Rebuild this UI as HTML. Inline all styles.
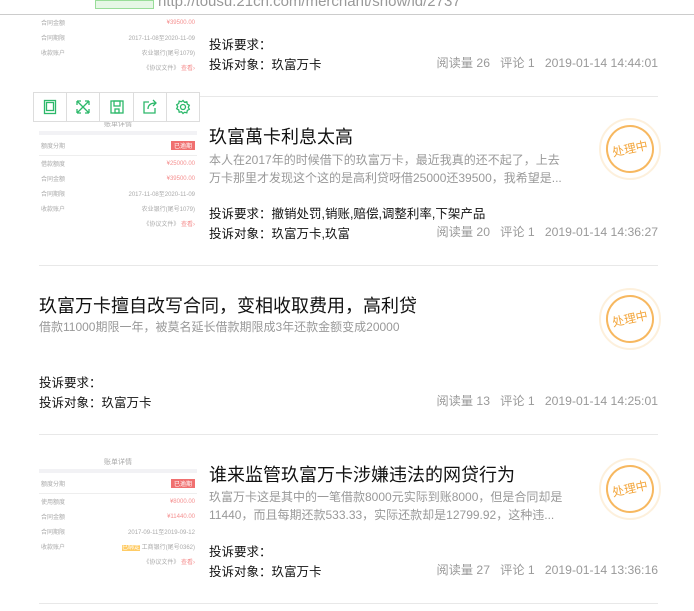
<!DOCTYPE html>
<html><head><meta charset="utf-8"><style>
body{margin:0;width:694px;height:611px;overflow:hidden;background:#fff;font-family:"Liberation Sans","Noto Sans CJK SC",sans-serif;position:relative}
.a{position:absolute;white-space:nowrap}
.t{font-size:18px;color:#111}
.d{font-size:12px;color:#999;line-height:18px}
.r{font-size:12.5px;color:#111}
.m{font-size:12.2px;color:#999;right:36px}
.hr{position:absolute;left:39px;width:619px;height:1px;background:#e8e8e8}
.stamp{position:absolute;width:58px;height:58px;border-radius:50%;border:2px solid #fdf0dc}
.stamp div{position:absolute;left:5px;top:5px;width:44px;height:44px;border-radius:50%;border:2px solid #f7b860;color:#f3a63c;font-size:12px;line-height:44px;text-align:center;transform:rotate(-12deg)}
.img{position:absolute;left:39px;width:158px;font-size:6px;color:#aaa}
.row{display:flex;justify-content:space-between;height:15px;align-items:center;padding:0 2px}
.red{color:#f59090}
.tb{position:absolute;left:33px;top:92px;width:165px;height:28px;border:1px solid #ddd;background:#fff;display:flex}
.tb div{flex:1;border-right:1px solid #ddd;display:flex;align-items:center;justify-content:center}
.tb div:last-child{border:none}
</style></head><body>
<div class="a" style="left:0;top:0;width:694px;height:14px;border-bottom:1px solid #ccc;background:#fff"></div>
<div class="a" style="left:95px;top:0;width:57px;height:7px;background:#e6f7e6;border:1px solid #9d9"></div>
<div class="a" style="left:158px;top:-7px;font-size:15px;color:#999">http://tousu.21cn.com/merchant/show/id/2737</div>

<div class="img" style="top:15px">
<div class="row"><span>合同金额</span><span class="red">¥39500.00</span></div>
<div class="row"><span>合同期限</span><span>2017-11-08至2020-11-09</span></div>
<div class="row"><span>收款账户</span><span>农业银行(尾号1079)</span></div>
<div class="row" style="justify-content:flex-end"><span>《协议文件》 <span class="red">查看›</span></span></div>
</div>
<div class="a r" style="left:209px;top:34px">投诉要求：</div>
<div class="a r" style="left:209px;top:54px">投诉对象：玖富万卡</div>
<div class="a m" style="top:53px">阅读量 26&nbsp;&nbsp;&nbsp;评论 1&nbsp;&nbsp;&nbsp;2019-01-14 14:44:01</div>
<div class="hr" style="top:96px"></div>

<div class="img" style="top:117px">
<div class="row" style="justify-content:center;height:14px"><span style="font-size:7px">账单详情</span></div>
<div style="height:4px;background:#f2f2f5"></div>
<div class="row" style="height:20px;border-bottom:1px solid #eee"><span>额度分期</span><span style="background:#f07070;color:#fff;padding:0 3px">已逾期</span></div>
<div class="row"><span>借款额度</span><span class="red">¥25000.00</span></div>
<div class="row"><span>合同金额</span><span class="red">¥39500.00</span></div>
<div class="row"><span>合同期限</span><span>2017-11-08至2020-11-09</span></div>
<div class="row"><span>收款账户</span><span>农业银行(尾号1079)</span></div>
<div class="row" style="justify-content:flex-end"><span>《协议文件》 <span class="red">查看›</span></span></div>
</div>
<div class="tb">
<div><svg width="16" height="16" viewBox="0 0 16 16" fill="none" stroke="#2cb86a" stroke-width="1.3"><rect x="2.5" y="1.5" width="11" height="13"/><rect x="4.5" y="3.5" width="7" height="8"/></svg></div>
<div><svg width="16" height="16" viewBox="0 0 16 16" fill="none" stroke="#2cb86a" stroke-width="1.3"><path d="M2 2L14 14M14 2L2 14M2 2h4M2 2v4M14 2h-4M14 2v4M2 14h4M2 14v-4M14 14h-4M14 14v-4"/></svg></div>
<div><svg width="16" height="16" viewBox="0 0 16 16" fill="none" stroke="#2cb86a" stroke-width="1.3"><rect x="2" y="2" width="12" height="12"/><rect x="5" y="2" width="6" height="5"/><rect x="6" y="10" width="4" height="4"/></svg></div>
<div><svg width="16" height="16" viewBox="0 0 16 16" fill="none" stroke="#2cb86a" stroke-width="1.3"><path d="M7 3H2v11h11V9M6 10c0-4 3-6 8-6M11 1l3 3-3 3"/></svg></div>
<div><svg width="16" height="16" viewBox="0 0 16 16" fill="none" stroke="#2cb86a" stroke-width="1.3"><circle cx="8" cy="8" r="2.5"/><path d="M8 1.5l1.5 1.8 2.3-.5.5 2.3 2 1.2-1 2 1 2-2 1.2-.5 2.3-2.3-.5L8 14.5l-1.5-1.8-2.3.5-.5-2.3-2-1.2 1-2-1-2 2-1.2.5-2.3 2.3.5z"/></svg></div>
</div>
<div class="a t" style="left:209px;top:123px">玖富萬卡利息太高</div>
<div class="a d" style="left:209px;top:151px">本人在2017年的时候借下的玖富万卡，最近我真的还不起了，上去<br>万卡那里才发现这个这的是高利贷呀借25000还39500，我希望是...</div>
<div class="a r" style="left:209px;top:203px">投诉要求：撤销处罚,销账,赔偿,调整利率,下架产品</div>
<div class="a r" style="left:209px;top:223px">投诉对象：玖富万卡,玖富</div>
<div class="a m" style="top:222px">阅读量 20&nbsp;&nbsp;&nbsp;评论 1&nbsp;&nbsp;&nbsp;2019-01-14 14:36:27</div>
<div class="stamp" style="left:599px;top:118px"><div>处理中</div></div>
<div class="hr" style="top:265px"></div>

<div class="a t" style="left:39px;top:292px">玖富万卡擅自改写合同，变相收取费用，高利贷</div>
<div class="a d" style="left:39px;top:318px">借款11000期限一年，被莫名延长借款期限成3年还款金额变成20000</div>
<div class="a r" style="left:39px;top:372px">投诉要求：</div>
<div class="a r" style="left:39px;top:392px">投诉对象：玖富万卡</div>
<div class="a m" style="top:391px">阅读量 13&nbsp;&nbsp;&nbsp;评论 1&nbsp;&nbsp;&nbsp;2019-01-14 14:25:01</div>
<div class="stamp" style="left:599px;top:288px"><div>处理中</div></div>
<div class="hr" style="top:434px"></div>

<div class="img" style="top:454px">
<div class="row" style="justify-content:center;height:15px"><span style="font-size:7px">账单详情</span></div>
<div style="height:4px;background:#f2f2f5"></div>
<div class="row" style="height:20px;border-bottom:1px solid #eee"><span>额度分期</span><span style="background:#f07070;color:#fff;padding:0 3px">已逾期</span></div>
<div class="row"><span>使用额度</span><span class="red">¥8000.00</span></div>
<div class="row"><span>合同金额</span><span class="red">¥11440.00</span></div>
<div class="row"><span>合同期限</span><span>2017-09-11至2019-09-12</span></div>
<div class="row"><span>收款账户</span><span><span style="background:#fc6;color:#fff">已绑定</span> 工商银行(尾号0362)</span></div>
<div class="row" style="justify-content:flex-end"><span>《协议文件》 <span class="red">查看›</span></span></div>
</div>
<div class="a t" style="left:209px;top:461px">谁来监管玖富万卡涉嫌违法的网贷行为</div>
<div class="a d" style="left:209px;top:488px">玖富万卡这是其中的一笔借款8000元实际到账8000，但是合同却是<br>11440，而且每期还款533.33，实际还款却是12799.92，这种违...</div>
<div class="a r" style="left:209px;top:541px">投诉要求：</div>
<div class="a r" style="left:209px;top:561px">投诉对象：玖富万卡</div>
<div class="a m" style="top:560px">阅读量 27&nbsp;&nbsp;&nbsp;评论 1&nbsp;&nbsp;&nbsp;2019-01-14 13:36:16</div>
<div class="stamp" style="left:599px;top:458px"><div>处理中</div></div>
<div class="hr" style="top:603px"></div>
</body></html>
